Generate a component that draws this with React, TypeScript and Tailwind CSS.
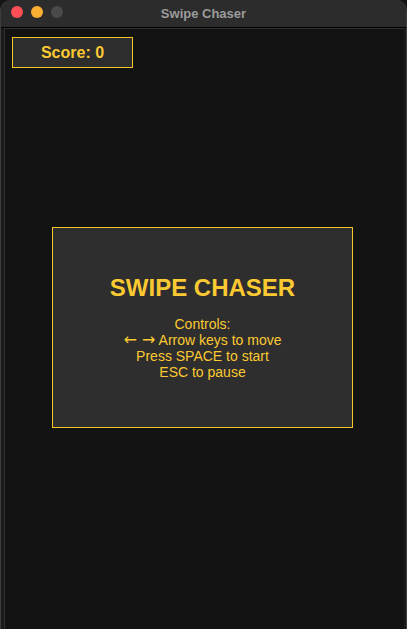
export default function App() {
  const controls = ['Controls:', 'ARROWS Arrow keys to move', 'Press SPACE to start', 'ESC to pause'];

  return (
    <div className="w-[407px] h-[629px] bg-[#131313] overflow-hidden" style={{ fontFamily: '"Liberation Sans", Arial, sans-serif' }}>
      <div className="h-full flex flex-col rounded-t-[10px] bg-[#1b1b1b] border-x border-[#3c3c3c] overflow-hidden">
        {/* title bar */}
        <div className="h-[28px] shrink-0 relative flex items-center justify-center bg-[#2c2c2c] border-b border-black">
          <div className="absolute left-[10px] top-[6px] flex gap-[8px]">
            <span className="w-[12px] h-[12px] rounded-full bg-[#fe4f56]" />
            <span className="w-[12px] h-[12px] rounded-full bg-[#fbaf32]" />
            <span className="w-[12px] h-[12px] rounded-full bg-[#4a4a4a]" />
          </div>
          <span className="text-[13px] font-bold text-[#9b9b9b]">Swipe Chaser</span>
        </div>

        {/* game area */}
        <div className="flex-1 ml-[3px] mr-[2px] bg-[#131313] border-l border-t border-[#2e2e2e]">
          <div className="ml-[7px] mt-[8px] w-[121px] h-[31px] border border-[#f5c42f] bg-[#2d2d2d] flex items-center justify-center">
            <span className="text-[16px] font-bold text-[#fbc932]">Score: 0</span>
          </div>

          <div className="ml-[47px] mt-[159px] w-[301px] h-[201px] border border-[#f5c42f] bg-[#2e2e2e] flex flex-col items-center">
            <h1 className="mt-[45px] text-[24px] leading-[30px] font-bold text-[#fbc932]">SWIPE CHASER</h1>
            <div className="mt-[13px] flex flex-col items-center text-[14px] leading-[16px] text-[#fbc932]">
              {controls.map((line) =>
                line.startsWith('ARROWS') ? (
                  <span key={line}>
                    <span style={{ fontFamily: '"DejaVu Sans", sans-serif' }} className="text-[16px] leading-[16px]">
                      {'\u2190 \u2192'}
                    </span>{' '}
                    Arrow keys to move
                  </span>
                ) : (
                  <span key={line}>{line}</span>
                )
              )}
            </div>
          </div>
        </div>
      </div>
    </div>
  );
}
